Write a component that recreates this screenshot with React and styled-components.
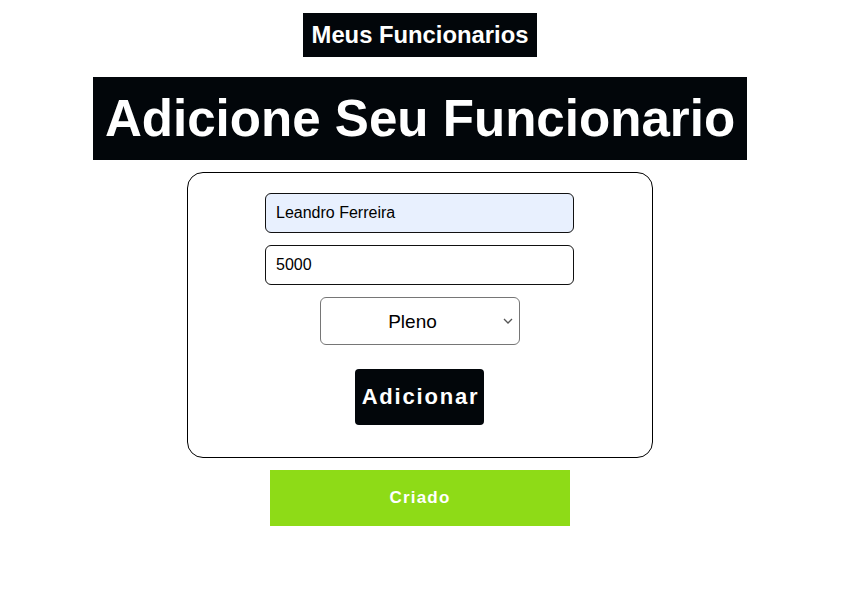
import React from "react";
import styled, { createGlobalStyle } from "styled-components";

const GlobalStyle = createGlobalStyle`
  html, body { margin: 0; padding: 0; background: #ffffff; }
  body { font-family: "Liberation Sans", Arial, sans-serif; }
`;

const chevron =
  "data:image/svg+xml;utf8," +
  encodeURIComponent(
    '<svg xmlns="http://www.w3.org/2000/svg" width="10" height="6" viewBox="0 0 10 6"><path d="M1 1l4 4 4-4" fill="none" stroke="#555" stroke-width="1.3"/></svg>'
  );

const Page = styled.div`
  display: flex;
  flex-direction: column;
  align-items: center;
  padding: 13px 1px 0 0;
`;

const Heading = styled.h1`
  margin: ${(p) => (p.$big ? "20px 0 0" : "0")};
  background: #02060a;
  color: #ffffff;
  font-family: "Liberation Sans", Arial, sans-serif;
  font-weight: 700;
  font-size: ${(p) => (p.$big ? "51.1px" : "23.8px")};
  line-height: ${(p) => (p.$big ? "59px" : "28px")};
  padding: ${(p) => (p.$big ? "12px 12px" : "8px 9px")};
  white-space: nowrap;
`;

const Form = styled.form`
  margin-top: 12px;
  width: 466px;
  height: 286px;
  box-sizing: border-box;
  border: 1px solid #000;
  border-radius: 16px;
  display: flex;
  flex-direction: column;
  align-items: center;
  padding: 20px 1px 0 0;
`;

const Input = styled.input`
  width: 309px;
  height: 40px;
  box-sizing: border-box;
  border: 1px solid #111;
  border-radius: 6px;
  padding: 0 10px;
  font-family: "Liberation Sans", Arial, sans-serif;
  font-size: 16px;
  color: #000;
  background: ${(p) => (p.$filled ? "#e8f0fe" : "#ffffff")};
  margin-bottom: 12px;
  outline: none;
`;

const Select = styled.select`
  appearance: none;
  -webkit-appearance: none;
  width: 200px;
  height: 48px;
  box-sizing: border-box;
  border: 1px solid #767676;
  border-radius: 6px;
  background: #fff url("${chevron}") no-repeat right 6px center;
  background-size: 10px 6px;
  padding: 0 18px 0 4px;
  font-family: "Liberation Sans", Arial, sans-serif;
  font-size: 19px;
  color: #000;
  text-align: center;
  text-align-last: center;
  margin-bottom: 24px;
`;

const AddButton = styled.button`
  width: 129px;
  height: 56px;
  border: none;
  border-radius: 4px;
  background: #02060a;
  color: #fff;
  font-family: "Liberation Sans", Arial, sans-serif;
  font-weight: 700;
  font-size: 22px;
  letter-spacing: 1.8px;
  padding: 0 0 0 2px;
  cursor: pointer;
`;

const Status = styled.div`
  margin-top: 12px;
  width: 300px;
  height: 56px;
  background: #8edb17;
  color: #fff;
  display: flex;
  align-items: center;
  justify-content: center;
  font-family: "Liberation Sans", Arial, sans-serif;
  font-weight: 700;
  font-size: 17px;
  letter-spacing: 1.2px;
`;

export default function App() {
  return (
    <>
      <GlobalStyle />
      <Page>
        <Heading as="h2">Meus Funcionarios</Heading>
        <Heading $big>Adicione Seu Funcionario</Heading>
        <Form onSubmit={(e) => e.preventDefault()}>
          <Input $filled type="text" defaultValue="Leandro Ferreira" />
          <Input type="number" defaultValue="5000" />
          <Select defaultValue="Pleno">
            <option>Junior</option>
            <option>Pleno</option>
            <option>Senior</option>
          </Select>
          <AddButton type="submit">Adicionar</AddButton>
        </Form>
        <Status>Criado</Status>
      </Page>
    </>
  );
}
